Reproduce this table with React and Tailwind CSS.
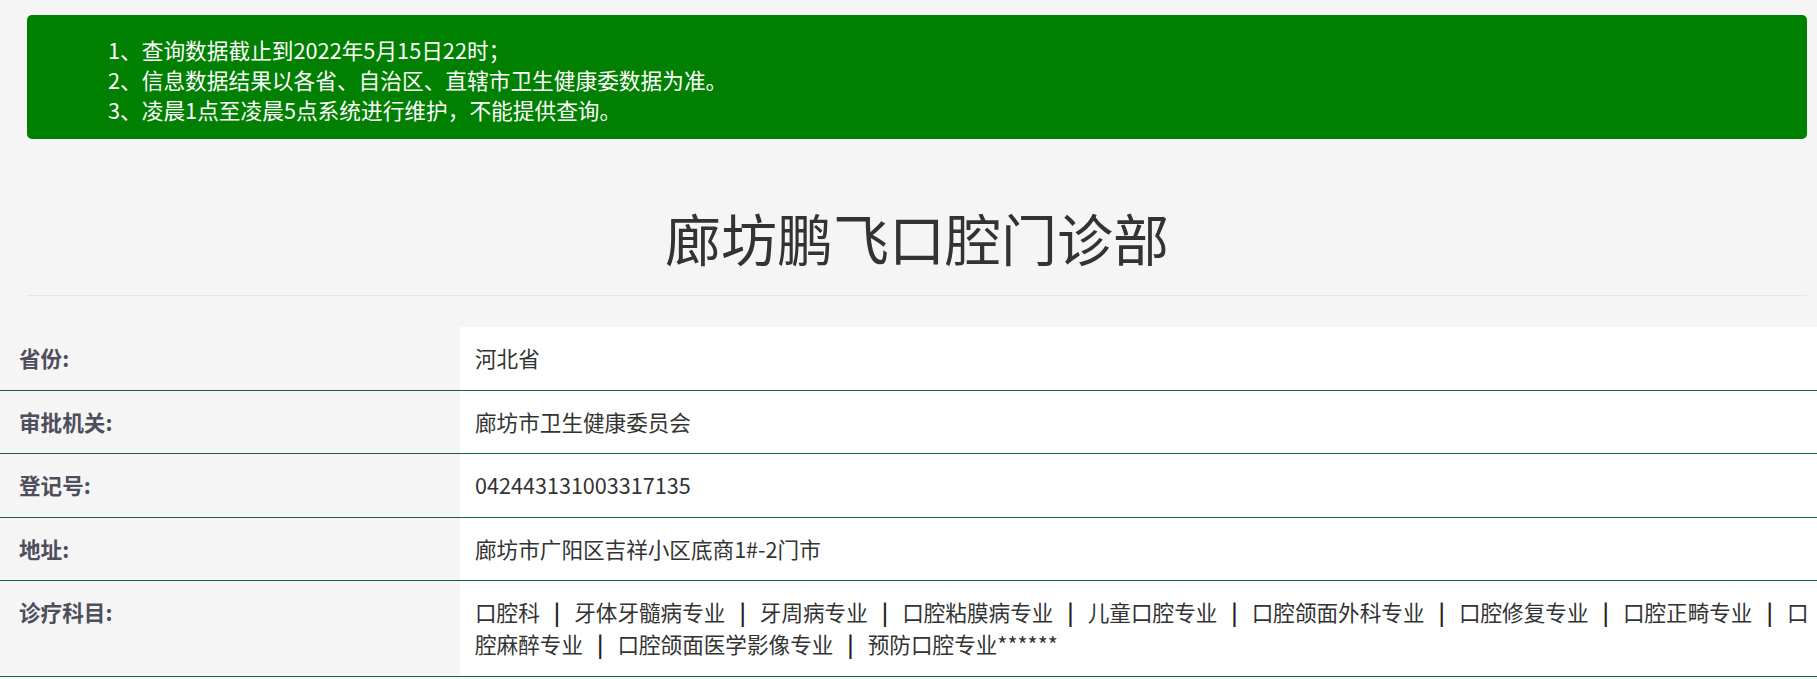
const notices = [
  "1、查询数据截止到2022年5月15日22时；",
  "2、信息数据结果以各省、自治区、直辖市卫生健康委数据为准。",
  "3、凌晨1点至凌晨5点系统进行维护，不能提供查询。",
];

const subjects = [
  "口腔科",
  "牙体牙髓病专业",
  "牙周病专业",
  "口腔粘膜病专业",
  "儿童口腔专业",
  "口腔颌面外科专业",
  "口腔修复专业",
  "口腔正畸专业",
  "口腔麻醉专业",
  "口腔颌面医学影像专业",
  "预防口腔专业******",
];

function Row({ label, children }) {
  return (
    <tr className="border-b border-[#1d5b4b]">
      <th className="w-[460px] py-[15.25px] pl-[19px] text-left align-top font-bold text-[#4f4e5c]">{label}</th>
      <td className="bg-white py-[15.25px] pl-[15px] pr-0 align-top text-[#333]">{children}</td>
    </tr>
  );
}

export default function App() {
  return (
    <div className="min-h-screen bg-[#f5f5f5] font-['Noto_Sans_CJK_SC',sans-serif]">
      <div className="pl-[27px] pr-[10px] pt-[15px]">
        <div className="rounded-[5px] bg-[#008000] pt-5 pb-[14px] pl-[81px] text-[21.7px] leading-[30px] text-white">
          {notices.map((n) => (
            <p key={n}>{n}</p>
          ))}
        </div>
        <h1 className="mt-[67px] text-center text-[56px] leading-[62px] font-normal text-[#333]">廊坊鹏飞口腔门诊部</h1>
        <div className="mt-[27px] border-t border-[#e6e6e6]" />
      </div>

      <table className="mt-[31px] w-full border-collapse text-[21.6px] leading-[32px]">
        <tbody>
          <Row label="省份:">河北省</Row>
          <Row label="审批机关:">廊坊市卫生健康委员会</Row>
          <Row label="登记号:">042443131003317135</Row>
          <Row label="地址:">廊坊市广阳区吉祥小区底商1#-2门市</Row>
          <Row label="诊疗科目:">
            {subjects.map((s, i) => (
              <span key={s}>
                {i > 0 && <b className="mx-[14px] text-[#222]">|</b>}
                {s}
              </span>
            ))}
          </Row>
        </tbody>
      </table>
    </div>
  );
}
